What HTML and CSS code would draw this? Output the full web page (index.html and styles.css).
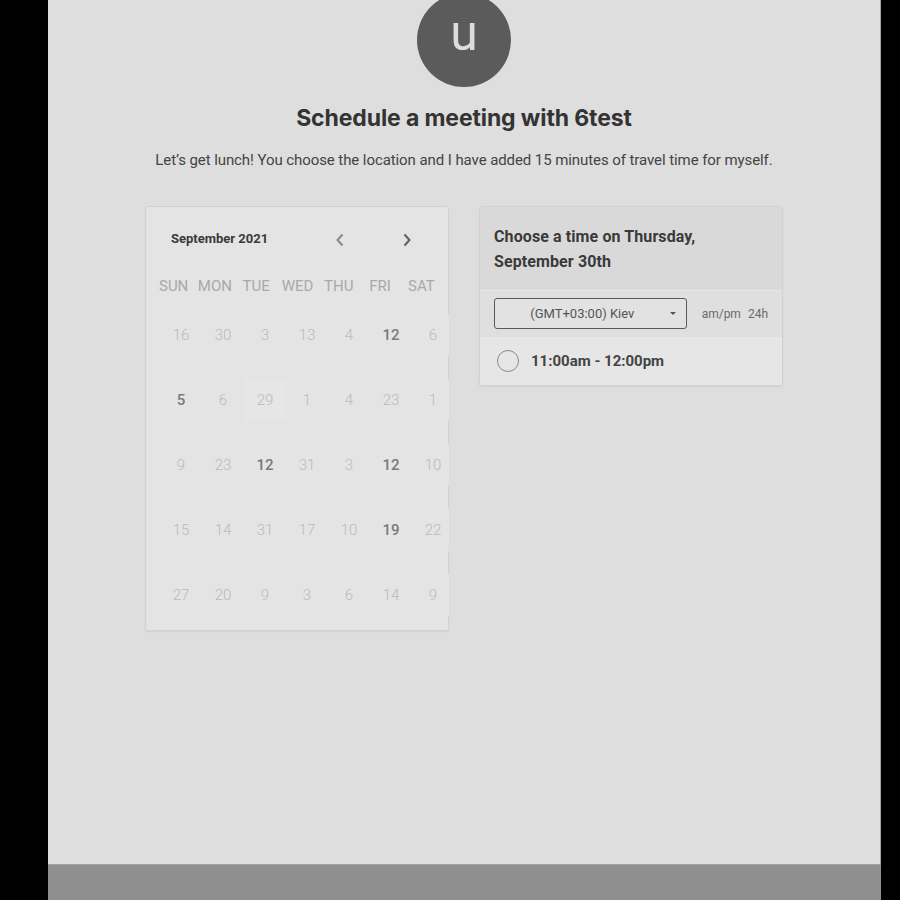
FILE: index.html
```html
<!DOCTYPE html>
<html>
<head>
<meta charset="utf-8">
<link rel="stylesheet" href="styles.css">
</head>
<body>
<div class="frame">
  <main class="page">
    <div class="avatar">u</div>
    <h1 class="title">Schedule a meeting with 6test</h1>
    <p class="subtitle">Let’s get lunch! You choose the location and I have added 15 minutes of travel time for myself.</p>
    <div class="cards">
      <section class="calendar">
        <div class="cal-head">
          <span class="month">September 2021</span>
          <div class="nav">
            <button class="nav-btn prev" aria-label="Previous month"><svg width="10" height="14" viewBox="0 0 10 14"><path d="M7.5 1.5 L2.5 7 L7.5 12.5" fill="none" stroke="#8a8a8a" stroke-width="2"/></svg></button>
            <button class="nav-btn next" aria-label="Next month"><svg width="10" height="14" viewBox="0 0 10 14"><path d="M2.5 1.5 L7.5 7 L2.5 12.5" fill="none" stroke="#5e5e5e" stroke-width="2"/></svg></button>
          </div>
        </div>
        <div class="weekdays">
          <span>SUN</span><span>MON</span><span>TUE</span><span>WED</span><span>THU</span><span>FRI</span><span>SAT</span>
        </div>
        <div class="days">
          <span>16</span><span>30</span><span>3</span><span>13</span><span>4</span><span class="on">12</span><span>6</span>
          <span class="on">5</span><span>6</span><span class="hover">29</span><span>1</span><span>4</span><span>23</span><span>1</span>
          <span>9</span><span>23</span><span class="on">12</span><span>31</span><span>3</span><span class="on">12</span><span>10</span>
          <span>15</span><span>14</span><span>31</span><span>17</span><span>10</span><span class="on">19</span><span>22</span>
          <span>27</span><span>20</span><span>9</span><span>3</span><span>6</span><span>14</span><span>9</span>
        </div>
      </section>
      <section class="times">
        <div class="times-head">Choose a time on Thursday,<br>September 30th</div>
        <div class="tz-row">
          <div class="tz-select"><span>(GMT+03:00) Kiev</span><i class="caret"></i></div>
          <div class="fmt"><span>am/pm</span><span>24h</span></div>
        </div>
        <div class="slot">
          <span class="radio"></span>
          <span class="slot-text">11:00am - 12:00pm</span>
        </div>
      </section>
    </div>
  </main>
  <footer class="footer"></footer>
</div>
</body>
</html>
```
FILE: styles.css
```css
html, body {
  margin: 0;
  padding: 0;
  background: #000;
  height: 900px;
  overflow: hidden;
}
body {
  font-family: Roboto, "Liberation Sans", sans-serif;
}
.frame {
  width: 833px;
  margin-left: 48px;
  display: flex;
  flex-direction: column;
  height: 900px;
}
.page {
  height: 864px;
  background: #dedede;
  border-right: 1px solid #a8a8a8;
  box-sizing: border-box;
  display: flex;
  flex-direction: column;
  align-items: center;
  overflow: hidden;
}
.footer {
  height: 36px;
  background: #8f8f8f;
  border-top: 1px solid #a3a3a3;
  box-sizing: border-box;
}
.avatar {
  width: 94px;
  height: 94px;
  border-radius: 50%;
  background: #5b5b5b;
  color: #dcdcdc;
  margin-top: -7px;
  display: flex;
  align-items: center;
  justify-content: center;
  font-size: 50px;
  line-height: 1;
  padding-bottom: 14px;
  box-sizing: border-box;
  font-weight: 400;
}
.title {
  margin: 16px 0 0;
  font-family: Inter, Roboto, sans-serif;
  font-size: 23px;
  line-height: 30px;
  font-weight: 700;
  color: #333;
  letter-spacing: -0.12px;
}
.subtitle {
  margin: 17px 0 0;
  font-size: 15px;
  line-height: 20px;
  color: #444;
  letter-spacing: -0.08px;
}
.cards {
  margin-top: 36px;
  display: flex;
  gap: 30px;
  align-items: flex-start;
}
.calendar {
  width: 304px;
  box-sizing: border-box;
  background: #e4e4e4;
  border: 1px solid #d2d2d2;
  border-radius: 3px;
  box-shadow: 0 1px 2px rgba(0,0,0,0.06);
  padding: 15px 0 14px;
}
.cal-head {
  height: 36px;
  display: flex;
  align-items: center;
  padding-left: 25px;
  padding-right: 25px;
}
.month {
  font-size: 13px;
  font-weight: 700;
  color: #3a3a3a;
  margin-top: -4px;
}
.nav {
  margin-left: auto;
  display: flex;
  gap: 35px;
}
.nav-btn {
  width: 32px;
  height: 32px;
  border: 0;
  background: transparent;
  padding: 0;
  display: flex;
  align-items: center;
  justify-content: center;
}
.weekdays {
  margin: 13px 0 0 7px;
  width: 289px;
  display: grid;
  grid-template-columns: repeat(7, 1fr);
  line-height: 30px;
  font-size: 15px;
  color: #a9a9a9;
  text-align: center;
}
.days {
  margin: 13px 0 0 14px;
  width: 289px;
  overflow: hidden;
  display: grid;
  grid-template-columns: repeat(7, 42px);
  grid-auto-rows: 42px;
  row-gap: 23px;
  font-size: 15px;
  font-weight: 300;
  color: #bababa;
}
.days span {
  display: flex;
  align-items: center;
  justify-content: center;
  background: #e4e4e4;
}
.days .on {
  color: #7a7a7a;
  font-weight: 500;
}
.days .hover {
  background: #e6e6e6;
}
.times {
  width: 304px;
  box-sizing: border-box;
  border: 1px solid #d2d2d2;
  border-radius: 3px;
  overflow: hidden;
  box-shadow: 0 1px 2px rgba(0,0,0,0.06);
}
.times-head {
  background: #d9d9d9;
  padding: 17px 14px 16px;
  font-size: 16px;
  line-height: 25px;
  font-weight: 700;
  color: #3a3a3a;
  letter-spacing: 0.1px;
  border-bottom: 1px solid #e8e8e8;
}
.tz-row {
  background: #dfdfdf;
  padding: 7px 14px 8px;
  display: flex;
  align-items: center;
}
.tz-select {
  width: 194px;
  height: 31px;
  box-sizing: border-box;
  border: 1px solid #5a5a5a;
  border-radius: 3px;
  background: #e2e2e2;
  display: flex;
  align-items: center;
  position: relative;
  font-size: 13px;
  color: #555;
}
.tz-select span {
  flex: 1;
  text-align: center;
  padding-right: 16px;
}
.caret {
  position: absolute;
  right: 10px;
  top: 13px;
  width: 0;
  height: 0;
  border-left: 3px solid transparent;
  border-right: 3px solid transparent;
  border-top: 3px solid #555;
}
.fmt {
  margin-left: 15px;
  display: flex;
  gap: 7px;
  font-size: 12px;
  color: #6a6a6a;
}
.slot {
  background: #e6e6e6;
  height: 48px;
  display: flex;
  align-items: center;
  padding-left: 17px;
}
.radio {
  width: 22px;
  height: 22px;
  box-sizing: border-box;
  border: 1.5px solid #8a8a8a;
  border-radius: 50%;
}
.slot-text {
  margin-left: 12px;
  font-size: 15px;
  font-weight: 700;
  color: #444;
}
```
